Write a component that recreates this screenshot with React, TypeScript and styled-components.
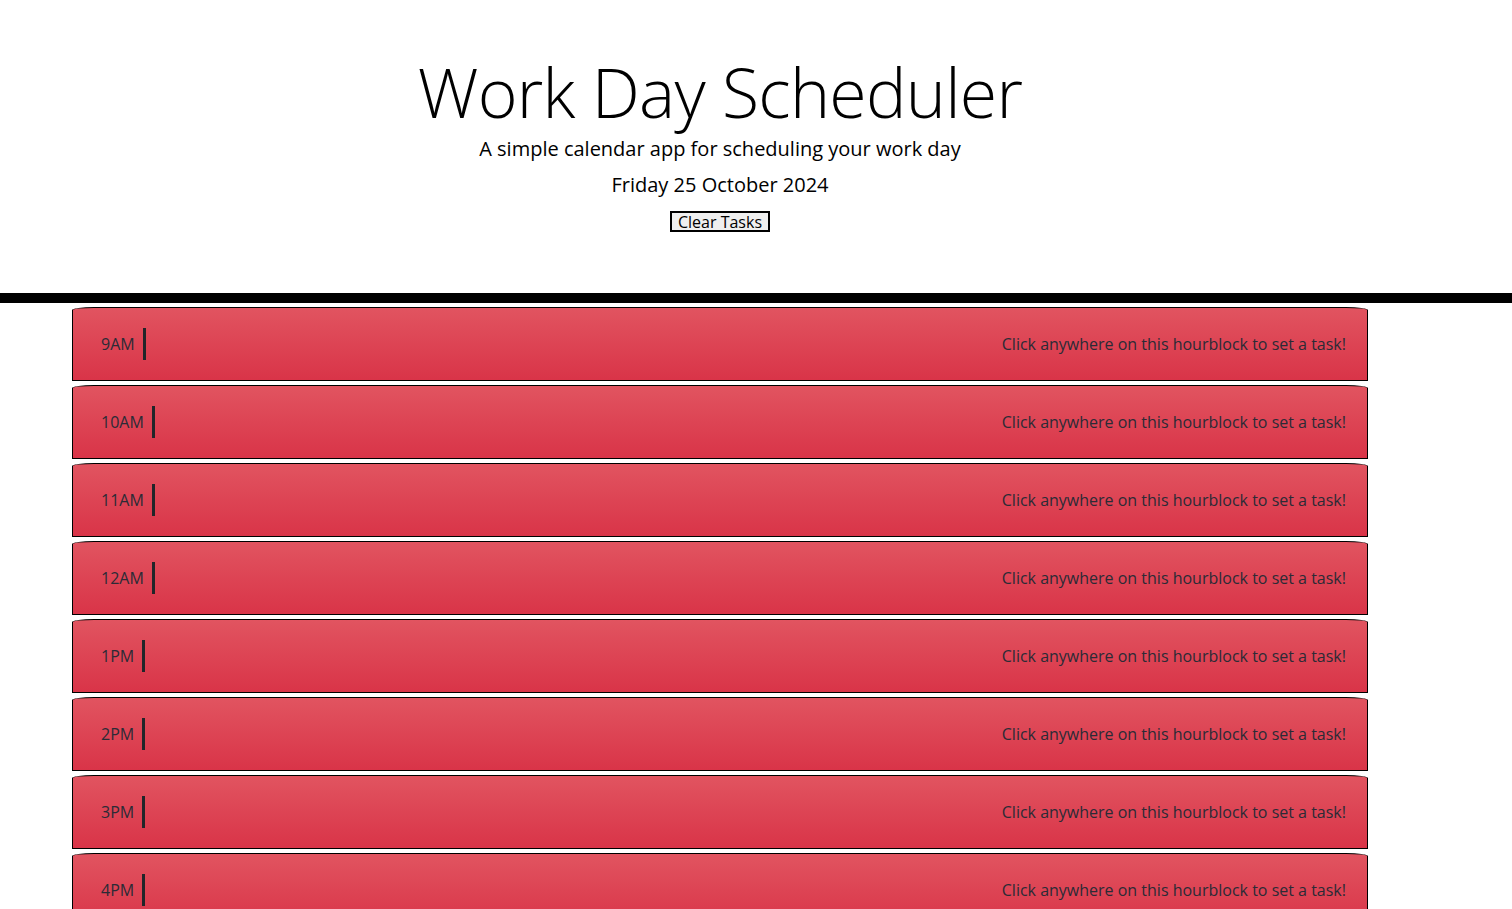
import React from "react";
import styled, { createGlobalStyle } from "styled-components";

const Global = createGlobalStyle`
  html, body { margin: 0; padding: 0; background: #fff; }
  body { font-family: "Open Sans", "Liberation Sans", sans-serif; color: #000; }
`;

const Header = styled.header`
  border-bottom: 10px solid #000;
  padding: 56px 0 61px;
`;

const HeaderInner = styled.div`
  width: 1296px;
  margin-left: 72px;
  display: flex;
  flex-direction: column;
  align-items: center;
  text-align: center;
`;

const Title = styled.h1`
  margin: 0;
  font-size: 68px;
  font-weight: 300;
  letter-spacing: -0.7px;
  line-height: 72px;
`;

const Lead = styled.p`
  margin: 6px 0 0;
  font-size: 20px;
  line-height: 30px;
`;

const DateLine = styled.p`
  margin: 6px 0 0;
  font-size: 20px;
  line-height: 30px;
`;

const ClearButton = styled.button`
  margin-top: 11px;
  font-family: "Open Sans", "Liberation Sans", sans-serif;
  font-size: 16px;
  line-height: 16px;
  padding: 1px 6px;
  height: 21px;
  background: #efefef;
  border: 2px solid #000;
  color: #000;
  border-radius: 0;
`;

const Blocks = styled.main`
  width: 1296px;
  margin-left: 72px;
  padding-top: 4px;
  display: flex;
  flex-direction: column;
  gap: 4px;
`;

const HourBlock = styled.div<{ $state: "past" | "present" | "future" }>`
  box-sizing: border-box;
  height: 74px;
  display: flex;
  align-items: center;
  justify-content: space-between;
  padding: 0 21px 0 28px;
  border: 1px solid #000;
  border-radius: 22px 22px 0 0 / 3px 3px 0 0;
  background: ${(p) =>
    p.$state === "past"
      ? "linear-gradient(#e15460, #d93448)"
      : p.$state === "present"
      ? "linear-gradient(#5cd075, #28a745)"
      : "linear-gradient(#4d9ff5, #0d6efd)"};
  color: #2b2b36;
  font-size: 16px;
  cursor: pointer;
`;

const HourLabel = styled.span`
  display: flex;
  align-items: center;
  height: 32px;
  padding-right: 8px;
  border-right: 3px solid #212529;
`;

const Hint = styled.span`
  color: #2b2b36;
`;

const hours = ["9AM", "10AM", "11AM", "12AM", "1PM", "2PM", "3PM", "4PM", "5PM"];

export default function App() {
  return (
    <>
      <Global />
      <Header>
        <HeaderInner>
          <Title>Work Day Scheduler</Title>
          <Lead>A simple calendar app for scheduling your work day</Lead>
          <DateLine>Friday 25 October 2024</DateLine>
          <ClearButton>Clear Tasks</ClearButton>
        </HeaderInner>
      </Header>
      <Blocks>
        {hours.map((h) => (
          <HourBlock key={h} $state="past">
            <HourLabel>{h}</HourLabel>
            <Hint>Click anywhere on this hourblock to set a task!</Hint>
          </HourBlock>
        ))}
      </Blocks>
    </>
  );
}
